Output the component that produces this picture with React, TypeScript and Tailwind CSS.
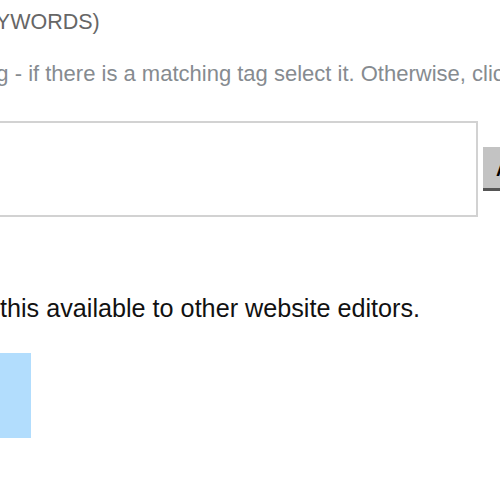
export default function App() {
  return (
    <div className="h-[500px] w-[500px] overflow-hidden bg-white font-['Liberation_Sans',Arial,sans-serif]">
      <div className="pt-[8px]">
        <h3 className="-ml-[40px] whitespace-nowrap text-[21.5px] leading-[28px] font-normal text-[#666]">
          (KEYWORDS)
        </h3>
        <p className="-ml-[22px] mt-[24px] whitespace-nowrap text-[22px] leading-[28px] text-[#868b90]">
          tag - if there is a matching tag select it. Otherwise, click Add to create it.
        </p>
        <div className="mt-[33px] flex items-center gap-[5px]">
          <input
            type="text"
            className="-ml-[100px] h-[96px] w-[578px] shrink-0 border-2 border-[#d2d2d2] bg-white outline-none"
          />
          <button className="h-[44px] w-[80px] shrink-0 border-b-[3px] border-[#555] bg-[#c3c3c3] pl-[13px] pt-[6px] text-left text-[18px] font-bold text-black">
            Add
          </button>
        </div>
        <label className="mt-[76px] block whitespace-nowrap text-[25.2px] leading-[30px] text-[#111]">
          this available to other website editors.
        </label>
        <div className="mt-[30px] h-[85px] w-[31px] bg-[#b2ddfd]" />
      </div>
    </div>
  );
}
